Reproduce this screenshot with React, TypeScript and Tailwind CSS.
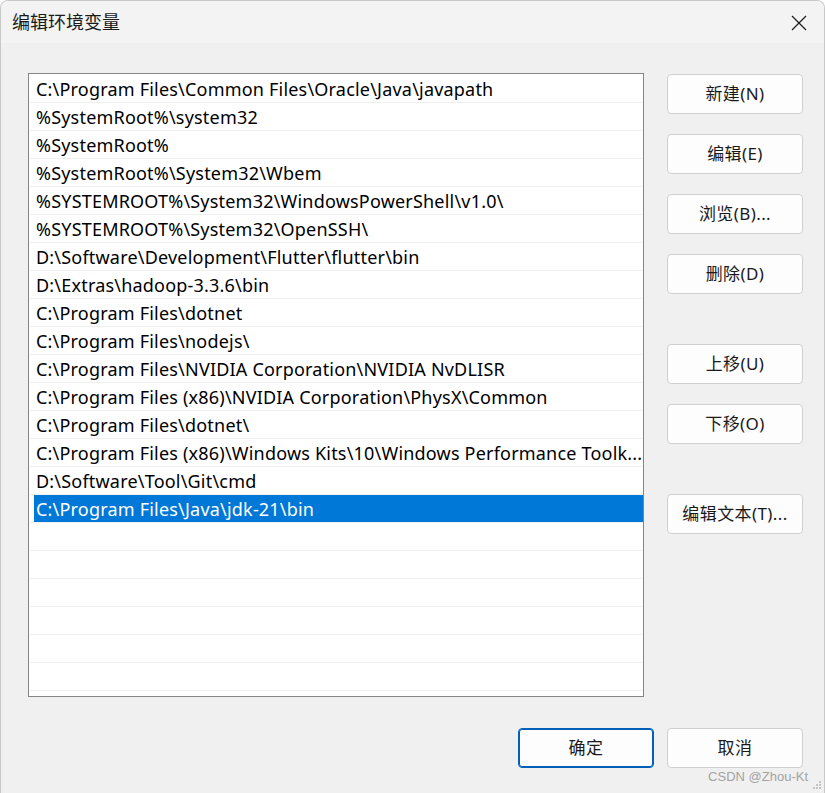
import React from "react";

const rows = [
  "C:\\Program Files\\Common Files\\Oracle\\Java\\javapath",
  "%SystemRoot%\\system32",
  "%SystemRoot%",
  "%SystemRoot%\\System32\\Wbem",
  "%SYSTEMROOT%\\System32\\WindowsPowerShell\\v1.0\\",
  "%SYSTEMROOT%\\System32\\OpenSSH\\",
  "D:\\Software\\Development\\Flutter\\flutter\\bin",
  "D:\\Extras\\hadoop-3.3.6\\bin",
  "C:\\Program Files\\dotnet",
  "C:\\Program Files\\nodejs\\",
  "C:\\Program Files\\NVIDIA Corporation\\NVIDIA NvDLISR",
  "C:\\Program Files (x86)\\NVIDIA Corporation\\PhysX\\Common",
  "C:\\Program Files\\dotnet\\",
  "C:\\Program Files (x86)\\Windows Kits\\10\\Windows Performance Toolk...",
  "D:\\Software\\Tool\\Git\\cmd",
  "C:\\Program Files\\Java\\jdk-21\\bin",
  "",
  "",
  "",
  "",
  "",
  "",
  "",
];

const FONT = { fontFamily: '"Noto Sans", "Noto Sans CJK SC", sans-serif' };

function Btn({ label, primary, className = "" }: { label: string; primary?: boolean; className?: string }) {
  return (
    <div
      className={
        "w-[136px] h-[40px] rounded-[4px] bg-[#fdfdfd] flex items-center justify-center text-[17px] tracking-[0.4px] text-[#1a1a1a] " +
        (primary ? "border border-[#005fb8] shadow-[inset_0_0_0_1px_#005fb8]" : "border border-[#d0d0d0]") +
        " " +
        className
      }
    >
      {label}
    </div>
  );
}

export default function App() {
  return (
    <div
      className="relative w-[825px] h-[793px] bg-[#f0f0f0] rounded-t-[8px] overflow-hidden border-t border-x border-[#c8c8c8] flex flex-col"
      style={FONT}
    >
      <div className="h-[42px] bg-[#f3f3f3] flex items-center justify-between pl-[11px] pr-[17px]">
        <span className="text-[18px] text-[#1a1a1a]">编辑环境变量</span>
        <svg width="16" height="16" viewBox="0 0 16 16" className="mt-[1px]">
          <path d="M1 1 L15 15 M15 1 L1 15" stroke="#1a1a1a" strokeWidth="1.2" fill="none" />
        </svg>
      </div>

      <div className="flex pl-[27px] pt-[30px]">
        <div className="w-[616px] h-[624px] border border-[#858585] bg-white pt-[1px] pl-[1px] overflow-hidden">
          {rows.map((r, i) => {
            const sel = i === 15;
            return (
              <div key={i} className="h-[28px] border-b border-[#f0f0f0]">
                <div
                  className={
                    "ml-[4px] h-[27px] flex items-center pl-[2px] text-[18px] tracking-[0.2px] " +
                    (sel ? "bg-[#0078d7] text-white" : "text-black")
                  }
                >
                  <span className="whitespace-nowrap block leading-[27px] pt-[1px]">{r}</span>
                </div>
              </div>
            );
          })}
        </div>

        <div className="ml-[23px] pt-[1px] flex flex-col">
          <Btn label="新建(N)" />
          <Btn label="编辑(E)" className="mt-[20px]" />
          <Btn label="浏览(B)..." className="mt-[20px]" />
          <Btn label="删除(D)" className="mt-[20px]" />
          <Btn label="上移(U)" className="mt-[50px]" />
          <Btn label="下移(O)" className="mt-[20px]" />
          <Btn label="编辑文本(T)..." className="mt-[50px]" />
        </div>
      </div>

      <div className="flex justify-end gap-[13px] pr-[21px] mt-[31px]">
        <Btn label="确定" primary />
        <Btn label="取消" />
      </div>

      <div className="absolute right-[16px] bottom-[7px] text-[13px] text-[#a3a3a3]" style={{ fontFamily: '"Liberation Sans", sans-serif' }}>
        CSDN @Zhou-Kt
      </div>
      <svg className="absolute right-[2px] bottom-[1px]" width="12" height="12" viewBox="0 0 12 12">
        <rect x="9" y="1" width="2" height="2" fill="#c4c4c4" />
        <rect x="6" y="4" width="2" height="2" fill="#c4c4c4" />
        <rect x="9" y="4" width="2" height="2" fill="#c4c4c4" />
        <rect x="3" y="7" width="2" height="2" fill="#c4c4c4" />
        <rect x="6" y="7" width="2" height="2" fill="#c4c4c4" />
        <rect x="9" y="7" width="2" height="2" fill="#c4c4c4" />
      </svg>
    </div>
  );
}
